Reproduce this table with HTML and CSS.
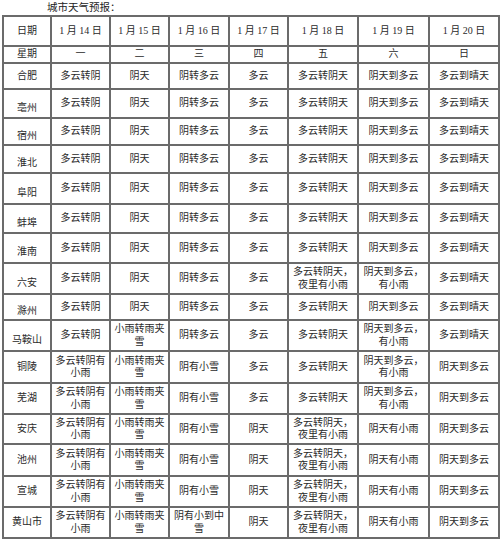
FILE: index.html
```html
<!DOCTYPE html>
<html lang="zh">
<head>
<meta charset="utf-8">
<link rel="stylesheet" href="styles.css">
</head>
<body>
<div class="title">城市天气预报：</div>
<table class="wx">
<colgroup>
<col class="c0"><col class="c1"><col class="c2"><col class="c3"><col class="c4"><col class="c5"><col class="c6"><col class="c7">
</colgroup>
<tr class="r30"><td>日期</td><td>1 月 14 日</td><td>1 月 15 日</td><td>1 月 16 日</td><td>1 月 17 日</td><td>1 月 18 日</td><td>1 月 19 日</td><td>1 月 20 日</td></tr>
<tr class="r17"><td>星期</td><td>一</td><td>二</td><td>三</td><td>四</td><td>五</td><td>六</td><td>日</td></tr>
<tr class="r26"><td>合肥</td><td>多云转阴</td><td>阴天</td><td>阴转多云</td><td>多云</td><td>多云转阴天</td><td>阴天到多云</td><td>多云到晴天</td></tr>
<tr class="r29"><td class="low">亳州</td><td>多云转阴</td><td>阴天</td><td>阴转多云</td><td>多云</td><td>多云转阴天</td><td>阴天到多云</td><td>多云到晴天</td></tr>
<tr class="r27"><td class="low">宿州</td><td>多云转阴</td><td>阴天</td><td>阴转多云</td><td>多云</td><td>多云转阴天</td><td>阴天到多云</td><td>多云到晴天</td></tr>
<tr class="r28"><td class="low">淮北</td><td>多云转阴</td><td>阴天</td><td>阴转多云</td><td>多云</td><td>多云转阴天</td><td>阴天到多云</td><td>多云到晴天</td></tr>
<tr class="r31"><td class="low">阜阳</td><td>多云转阴</td><td>阴天</td><td>阴转多云</td><td>多云</td><td>多云转阴天</td><td>阴天到多云</td><td>多云到晴天</td></tr>
<tr class="r29"><td class="low">蚌埠</td><td>多云转阴</td><td>阴天</td><td>阴转多云</td><td>多云</td><td>多云转阴天</td><td>阴天到多云</td><td>多云到晴天</td></tr>
<tr class="r30"><td class="low">淮南</td><td>多云转阴</td><td>阴天</td><td>阴转多云</td><td>多云</td><td>多云转阴天</td><td>阴天到多云</td><td>多云到晴天</td></tr>
<tr class="r31"><td class="low">六安</td><td>多云转阴</td><td>阴天</td><td>阴转多云</td><td>多云</td><td>多云转阴天，<br>夜里有小雨</td><td>阴天到多云，<br>有小雨</td><td>多云到晴天</td></tr>
<tr class="r26"><td class="low">滁州</td><td>多云转阴</td><td>阴天</td><td>阴转多云</td><td>多云</td><td>多云转阴天</td><td>阴天到多云</td><td>多云到晴天</td></tr>
<tr class="r31"><td class="low">马鞍山</td><td>多云转阴</td><td>小雨转雨夹<br>雪</td><td>阴转多云</td><td>多云</td><td>多云转阴天</td><td>阴天到多云，<br>有小雨</td><td>多云到晴天</td></tr>
<tr class="r32"><td>铜陵</td><td>多云转阴有<br>小雨</td><td>小雨转雨夹<br>雪</td><td>阴有小雪</td><td>多云</td><td>多云转阴天</td><td>阴天到多云，<br>有小雨</td><td>阴天到多云</td></tr>
<tr class="r31"><td>芜湖</td><td>多云转阴有<br>小雨</td><td>小雨转雨夹<br>雪</td><td>阴有小雪</td><td>多云</td><td>多云转阴天</td><td>阴天到多云，<br>有小雨</td><td>阴天到多云</td></tr>
<tr class="r30"><td>安庆</td><td>多云转阴有<br>小雨</td><td>小雨转雨夹<br>雪</td><td>阴有小雪</td><td>阴天</td><td>多云转阴天，<br>夜里有小雨</td><td>阴天有小雨</td><td>阴天到多云</td></tr>
<tr class="r32"><td>池州</td><td>多云转阴有<br>小雨</td><td>小雨转雨夹<br>雪</td><td>阴有小雪</td><td>阴天</td><td>多云转阴天，<br>夜里有小雨</td><td>阴天有小雨</td><td>阴天到多云</td></tr>
<tr class="r31"><td>宣城</td><td>多云转阴有<br>小雨</td><td>小雨转雨夹<br>雪</td><td>阴有小雪</td><td>阴天</td><td>多云转阴天，<br>夜里有小雨</td><td>阴天有小雨</td><td>阴天到多云</td></tr>
<tr class="r31"><td>黄山市</td><td>多云转阴有<br>小雨</td><td>小雨转雨夹<br>雪</td><td>阴有小到中<br>雪</td><td>阴天</td><td>多云转阴天，<br>夜里有小雨</td><td>阴天有小雨</td><td>阴天到多云</td></tr>
</table>
</body>
</html>
```
FILE: styles.css
```css
html, body {
  margin: 0;
  padding: 0;
  background: #ffffff;
}
body {
  font-family: "Liberation Serif", "Noto Sans CJK SC", serif;
  font-size: 10px;
  color: #2a2a2a;
}
.title {
  height: 15px;
  line-height: 15px;
  padding-left: 47px;
  font-size: 10.5px;
  color: #222;
}
.wx {
  margin-left: 2px;
  border-collapse: collapse;
  table-layout: fixed;
  width: 497px;
}
.wx td {
  border: 2px solid #6b6b6b;
  padding: 0;
  text-align: center;
  vertical-align: middle;
  line-height: 12.5px;
  overflow: hidden;
  white-space: nowrap;
}
.wx td.low {
  padding-top: 9px;
}
.c0 { width: 48px; }
.c1 { width: 59px; }
.c2 { width: 59px; }
.c3 { width: 60px; }
.c4 { width: 59px; }
.c5 { width: 70px; }
.c6 { width: 71px; }
.c7 { width: 70px; }
.r17 { height: 17px; }
.r26 { height: 26px; }
.r27 { height: 27px; }
.r28 { height: 28px; }
.r29 { height: 29px; }
.r30 { height: 30px; }
.r31 { height: 31px; }
.r32 { height: 32px; }
```
